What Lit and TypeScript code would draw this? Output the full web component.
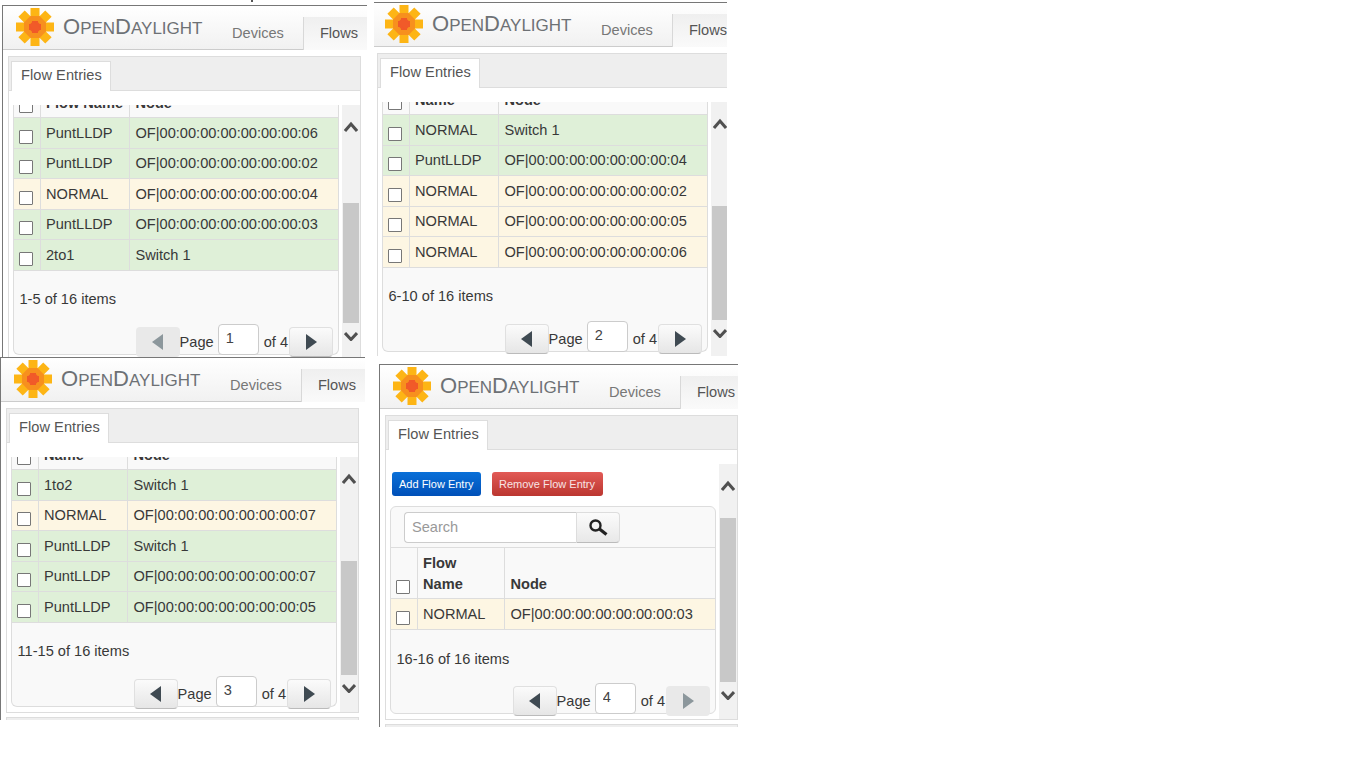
import { LitElement, html, css, nothing, svg } from "lit";
import { customElement } from "lit/decorators.js";

type Row = { name: string; node: string; ok: boolean };
type Win = {
  x: number; y: number; w: number; h: number; ox: number; oy: number;
  nameW: number; rows: Row[]; head: unknown; range: string; page: number;
  thumbTop: number; full?: boolean;
};
const of = (n: number) => `OF|00:00:00:00:00:00:00:0${n}`;
const r = (name: string, node: string, ok = true): Row => ({ name, node, ok });

const WINDOWS: Win[] = [
  { x: 0, y: 0, w: 367, h: 357, ox: 0, oy: 0, nameW: 89, page: 1, range: "1-5 of 16 items", thumbTop: 203,
    head: html`Flow Name`,
    rows: [r("PuntLLDP", of(6)), r("PuntLLDP", of(2)), r("NORMAL", of(4), false), r("PuntLLDP", of(3)), r("2to1", "Switch 1")] },
  { x: 374, y: 2, w: 353, h: 354, ox: 5, oy: 5, nameW: 89, page: 2, range: "6-10 of 16 items", thumbTop: 209,
    head: html`Name`,
    rows: [r("NORMAL", "Switch 1"), r("PuntLLDP", of(4)), r("NORMAL", of(2), false), r("NORMAL", of(5), false), r("NORMAL", of(6), false)] },
  { x: 0, y: 357, w: 365, h: 363, ox: 2, oy: 5, nameW: 89, page: 3, range: "11-15 of 16 items", thumbTop: 209,
    head: html`Name`,
    rows: [r("1to2", "Switch 1"), r("NORMAL", of(7), false), r("PuntLLDP", "Switch 1"), r("PuntLLDP", of(7)), r("PuntLLDP", of(5))] },
  { x: 379, y: 364, w: 359, h: 363, ox: 2, oy: 5, nameW: 87, page: 4, range: "16-16 of 16 items", thumbTop: 159, full: true,
    head: html`Flow<br />Name`,
    rows: [r("NORMAL", of(3), false)] },
];

const arm = (a: number, len: number, wd: number) =>
  svg`<rect x=${19 - wd / 2} y=${19 - len / 2} width=${wd} height=${len} transform="rotate(${a} 19 19)"></rect>`;
const logo = svg`
  <g fill="#fdb515">${[0, 45, 90, 135].map((a) => arm(a, 38, 9))}</g>
  <g fill="#f7901e">${[0, 45, 90, 135].map((a) => arm(a, 22, 9))}</g>
  <g fill="#f15a29">${[0, 90].map((a) => arm(a, 12, 6))}${[45, 135].map((a) => arm(a, 11, 6))}</g>
`;

@customElement("app-root")
export class AppRoot extends LitElement {
  static styles = css`
    :host { display: block; position: relative; width: 1366px; height: 768px; background: #fff; overflow: hidden;
      font-family: "Liberation Sans", Arial, sans-serif; font-size: 14.6px; color: #383838; }
    .win { position: absolute; overflow: hidden; }
    .crumb { position: absolute; left: 251px; top: 0; width: 2px; height: 2px; background: #555; }
    .panel { width: 370px; padding: 5px 0 0 2px; box-sizing: border-box; background: #fff; }
    .frame { border-left: 1px solid #777; border-top: 1px solid #777; height: 363px; box-sizing: border-box; }
    .header { height: 44px; box-sizing: border-box; border-bottom: 1px solid #ccc; display: flex; width: 365px;
      background: linear-gradient(#ffffff, #f1f1f1); }
    .logo { width: 38px; height: 38px; margin: 2px 0 0 13px; flex: none; }
    .word { margin-left: 9px; width: 139px; flex: none; color: #6d7175; font-size: 17px; line-height: 24px; padding-top: 9px;
      text-transform: uppercase; white-space: nowrap; }
    .word b { font-weight: normal; font-size: 22px; }
    .nav { padding: 19px 19px 0 30px; color: #777; line-height: 17px; }
    .nav.on { flex: 1; margin-top: 11px; padding: 8px 0 0 16px; color: #555; background: linear-gradient(#efefef, #fafafa);
      border-left: 1px solid #d8d8d8; margin-bottom: -1px; }
    .box { margin: 6px 0 0 5px; width: 353px; height: 305px; box-sizing: border-box; border: 1px solid #ddd; background: #fff; }
    .tabs { height: 34px; box-sizing: border-box; background: #eee; border-bottom: 1px solid #ddd; padding: 4px 0 0 2px; display: flex; }
    .tab { width: 100px; height: 30px; box-sizing: border-box; padding: 5px 0 0 9px; border: 1px solid #ddd; border-bottom: 0; background: #fff; color: #555;
      line-height: 17px; letter-spacing: 0.05px; white-space: nowrap; }
    .content { display: flex; height: 269px; box-sizing: border-box; padding: 14px 0 0 4px; }
    .col { width: 326px; height: 250px; margin-right: 3px; flex: none; display: flex; flex-direction: column; }
    .actions { display: flex; gap: 11px; padding: 8px 0 10px 2px; }
    .btn { height: 24px; box-sizing: border-box; border-radius: 3px; color: #fff; font-size: 11px; line-height: 24px; padding: 0 7px; white-space: nowrap; }
    .blue { width: 89px; background: linear-gradient(#0a70d8, #0050b8); }
    .red { width: 111px; background: linear-gradient(#e25a56, #bb3630); color: #f8e4e4; }
    .grid { flex: 1; min-height: 0; display: flex; flex-direction: column; box-sizing: border-box; background: #f9f9f9;
      border: 1px solid #ddd; border-top: 0; border-radius: 0 0 6px 6px; }
    .grid.top { border-top: 1px solid #ddd; border-radius: 6px; }
    .search { display: flex; height: 40px; box-sizing: border-box; padding: 5px 0 0 13px; }
    .sinput { width: 172px; height: 31px; box-sizing: border-box; border: 1px solid #ccc; border-right: 0; border-radius: 4px 0 0 4px;
      background: #fff; color: #999; padding: 0 7px; line-height: 28px; }
    .sbtn { width: 44px; height: 31px; box-sizing: border-box; border: 1px solid #ddd; border-bottom-color: #bbb; border-radius: 0 4px 4px 0;
      background: linear-gradient(#fbfbfb, #e8e8e8); display: flex; align-items: center; justify-content: center; }
    .row { display: grid; box-sizing: border-box; height: 30.5px; border-bottom: 1px solid #ddd; }
    .row > div { border-right: 1px solid #ddd; padding-left: 5px; line-height: 20px; padding-top: 4.75px; box-sizing: border-box; min-width: 0; overflow: hidden; }
    .row > div:last-child { border-right: 0; padding-left: 5.5px; }
    .row.ok { background: #dff0d8; }
    .row.warn { background: #fdf6e3; }
    .head { height: 13px; overflow: hidden; }
    .head.tall { height: 52px; border-top: 1px solid #ddd; }
    .row.head > div { padding-top: 0; font-weight: bold; line-height: 21px; display: flex; align-items: flex-end; padding-bottom: 3px; }
    .row > .cbc { padding-top: 0; }
    .cb { display: block; width: 14px; height: 14px; box-sizing: border-box; border: 1px solid #777; border-radius: 1px; background: #fff; margin-top: 11.75px; }
    .head .cb { margin: 0 0 1px; }
    .range { padding: 18.5px 0 0 5.5px; line-height: 20px; }
    .range.low { padding-top: 19.5px; }
    .pager { margin-top: auto; margin-bottom: -3px; display: flex; justify-content: flex-end; padding-right: 5px; height: 33px; }
    .arrow { width: 44px; height: 30px; margin-top: 3px; box-sizing: border-box; border-radius: 4px; display: flex; align-items: center; justify-content: center;
      border: 1px solid #e0e0e0; border-bottom-color: #bbb; background: linear-gradient(#fbfbfb, #e6e6e6); fill: #3f4a52; flex: none; }
    .arrow.off { border: 0; background: #e9e9e9; fill: #8c979c; }
    .ptext { line-height: 20px; padding-top: 8px; white-space: nowrap; }
    .ptext.of { margin-right: 1px; }
    .pinput { width: 41px; height: 31px; margin: 0 5px 0 4px; box-sizing: border-box; border: 1px solid #ccc; border-radius: 4px; background: #fff; font: inherit;
      color: #444; padding: 0 0 3px 7px; outline: 0; flex: none; }
    .sbar { width: 18px; height: 255px; flex: none; background: #f1f1f1; display: flex; flex-direction: column; align-items: center; }
    .chev { display: block; flex: none; }
    .thumb { width: 16px; background: #c8c8c8; flex: none; }
    .next { height: 20px; border: 1px solid #ddd; border-bottom: 0; background: #eee; width: 353px; margin: 4px 0 0 5px; box-sizing: border-box; }
  `;

  private arrow(dir: "l" | "r", off: boolean) {
    return html`<div class="arrow ${off ? "off" : ""}">
      <svg width="11" height="16" viewBox="0 0 11 16">
        <polygon points=${dir === "l" ? "11,0 0,8 11,16" : "0,0 11,8 0,16"}></polygon>
      </svg>
    </div>`;
  }

  private panel(w: Win) {
    const tmpl = `grid-template-columns: 27px ${w.nameW}px 1fr`;
    const up = w.thumbTop - 135;
    return html`<div class="win" style="left:${w.x}px;top:${w.y}px;width:${w.w}px;height:${w.h}px">
      <div class="panel" style="margin:${-w.oy}px 0 0 ${-w.ox}px">
        <div class="frame">
          <div class="header">
            <svg class="logo" viewBox="0 0 38 38">${logo}</svg>
            <div class="word"><b>O</b>pen<b>D</b>aylight</div>
            <div class="nav">Devices</div>
            <div class="nav on">Flows</div>
          </div>
          <div class="box">
            <div class="tabs"><div class="tab">Flow Entries</div></div>
            <div class="content">
              <div class="col">
                ${w.full ? html`<div class="actions"><div class="btn blue">Add Flow Entry</div><div class="btn red">Remove Flow Entry</div></div>` : nothing}
                <div class="grid ${w.full ? "top" : ""}">
                  ${w.full ? html`<div class="search">
                    <div class="sinput">Search</div>
                    <div class="sbtn"><svg width="19" height="17" viewBox="0 0 19 17">
                      <circle cx="6.5" cy="6.5" r="5" fill="none" stroke="#222" stroke-width="2.4"></circle>
                      <path d="M10.5 10 L17.5 15.5" stroke="#222" stroke-width="3.2"></path>
                    </svg></div>
                  </div>` : nothing}
                  <div class="row head ${w.full ? "tall" : ""}" style=${tmpl}>
                    <div class="cbc"><span class="cb"></span></div>
                    <div><span>${w.head}</span></div>
                    <div><span>Node</span></div>
                  </div>
                  ${w.rows.map((x) => html`<div class="row ${x.ok ? "ok" : "warn"}" style=${tmpl}>
                    <div class="cbc"><span class="cb"></span></div>
                    <div>${x.name}</div>
                    <div>${x.node}</div>
                  </div>`)}
                  <div class="range ${w.full ? "low" : ""}">${w.range}</div>
                  <div class="pager">
                    ${this.arrow("l", w.page === 1)}
                    <span class="ptext">Page</span>
                    <input class="pinput" .value=${String(w.page)} />
                    <span class="ptext of">of 4</span>
                    ${this.arrow("r", w.page === 4)}
                  </div>
                </div>
              </div>
              <div class="sbar">
                <svg class="chev" width="14" height="30" viewBox="0 0 14 30"><path d="M1 26 L7 19 L13 26" fill="none" stroke="#505050" stroke-width="3"></path></svg>
                <div class="thumb" style="margin-top:${up}px;height:${323 - w.thumbTop}px"></div>
                <svg class="chev" width="14" height="18" viewBox="0 0 14 18"><path d="M1 10 L7 16.5 L13 10" fill="none" stroke="#505050" stroke-width="3"></path></svg>
              </div>
            </div>
          </div>
          <div class="next"></div>
        </div>
      </div>
    </div>`;
  }

  render() {
    return html`${WINDOWS.map((w) => this.panel(w))}<div class="crumb"></div>`;
  }
}
